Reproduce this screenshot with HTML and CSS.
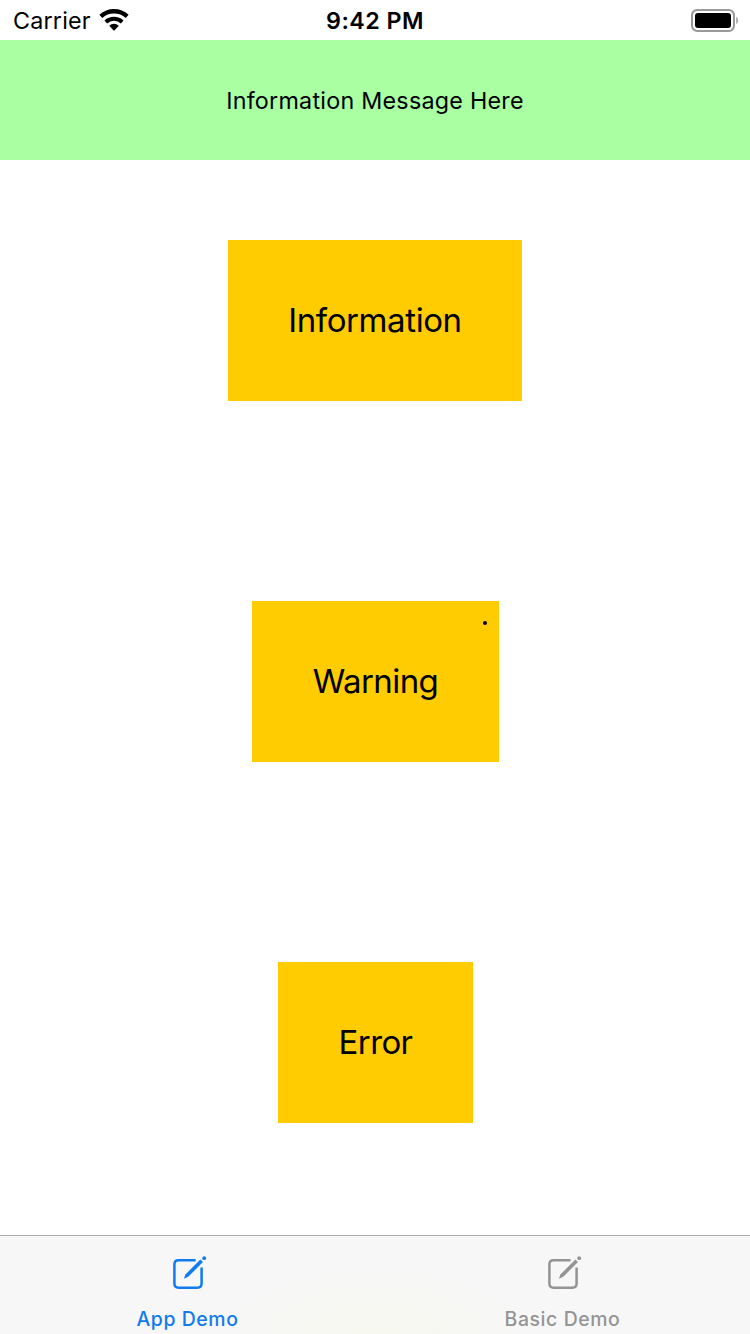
FILE: index.html
```html
<!DOCTYPE html>
<html lang="en">
<head>
<meta charset="utf-8">
<title>App Demo</title>
<link rel="stylesheet" href="styles.css">
</head>
<body>
<div class="screen">
  <header class="status">
    <div class="carrier">
      <span class="carrier-name">Carrier</span>
      <svg class="wifi" width="32" height="24" viewBox="0 0 32 24" fill="none" stroke="#000">
        <path stroke-width="4.3" d="M2.8 8.3A19.8 19.8 0 0 1 29.2 8.3"/>
        <path stroke-width="4" d="M7.8 13.9A12.3 12.3 0 0 1 24.2 13.9"/>
        <path fill="#000" stroke="none" d="M11.2 17.7A7 7 0 0 1 20.8 17.7L16.6 22.3Q16 22.9 15.4 22.3Z"/>
      </svg>
    </div>
    <span class="time">9:42 PM</span>
    <svg class="battery" width="50" height="24" viewBox="0 0 50 24">
      <rect x="2" y="2" width="42" height="21" rx="5.2" fill="none" stroke="#999" stroke-width="2"/>
      <rect x="5" y="5" width="36" height="15" rx="3" fill="#000"/>
      <path d="M46.3 8.8C48.5 10 48.5 15 46.3 16.2Z" fill="#999"/>
    </svg>
  </header>
  <div class="banner"><span class="banner-text">Information Message Here</span></div>
  <main class="content">
    <button class="box box-info"><span class="label label-info">Information</span></button>
    <button class="box box-warning"><span class="label">Warning</span><i class="dot"></i></button>
    <button class="box box-error"><span class="label">Error</span></button>
  </main>
  <nav class="tabs">
    <a class="tab active">
      <svg class="compose" width="40" height="36" viewBox="0 0 40 36" fill="none" stroke="currentColor">
        <path stroke-width="2.5" d="M25.6 5.3H8.6Q4.4 5.3 4.4 9.5V28.6Q4.4 32.8 8.6 32.8H27.4Q31.6 32.8 31.6 28.6V12.4"/>
        <path fill="currentColor" stroke="none" d="M14.1 22.9L15.6 19.3L30.4 4.5L33 7.1L18.2 21.8L14.6 23.5Q13.8 23.7 14.1 22.9Z"/>
        <circle cx="34.2" cy="3.2" r="1.9" fill="currentColor" stroke="none"/>
      </svg>
      <span class="tab-name">App Demo</span>
    </a>
    <a class="tab">
      <svg class="compose" width="40" height="36" viewBox="0 0 40 36" fill="none" stroke="currentColor">
        <path stroke-width="2.5" d="M25.6 5.3H8.6Q4.4 5.3 4.4 9.5V28.6Q4.4 32.8 8.6 32.8H27.4Q31.6 32.8 31.6 28.6V12.4"/>
        <path fill="currentColor" stroke="none" d="M14.1 22.9L15.6 19.3L30.4 4.5L33 7.1L18.2 21.8L14.6 23.5Q13.8 23.7 14.1 22.9Z"/>
        <circle cx="34.2" cy="3.2" r="1.9" fill="currentColor" stroke="none"/>
      </svg>
      <span class="tab-name">Basic Demo</span>
    </a>
  </nav>
</div>
</body>
</html>
```
FILE: styles.css
```css
* { box-sizing: border-box; }
body { margin: 0; background: #fff; color: #000; font-family: Inter, "Liberation Sans", sans-serif; }
svg { display: block; }
.screen { width: 750px; height: 1334px; display: flex; flex-direction: column; overflow: hidden; white-space: nowrap; }
.status { height: 40px; display: grid; grid-template-columns: 1fr auto 1fr; align-items: center; padding: 0 10px 0 13px; }
.carrier { display: flex; align-items: center; gap: 7px; }
.carrier-name { font-size: 23.3px; line-height: 38px; padding-top: 2px; letter-spacing: 0.2px; }
.time { font-size: 23.3px; line-height: 38px; padding-top: 2px; font-weight: 600; letter-spacing: 0.45px; margin-left: -3px; }
.battery { justify-self: end; }
.banner { height: 120px; background: #abffa3; display: flex; align-items: center; justify-content: center; }
.banner-text { font-size: 23.3px; line-height: 38px; padding-top: 2px; letter-spacing: 0.25px; }
.content { flex: 1; display: flex; flex-direction: column; align-items: center; gap: 200px; padding-top: 80px; }
.box { height: 161px; flex: none; border: 0; padding: 0; background: #ffcc02; color: #000; font: 400 33px/40px Inter, "Liberation Sans", sans-serif; display: flex; align-items: center; justify-content: center; position: relative; }
.box-info { width: 294px; }
.box-warning { width: 247px; margin-left: 1px; }
.box-error { width: 195px; margin-left: 1px; }
.label { letter-spacing: -0.6px; padding-bottom: 2px; }
.label-info { letter-spacing: -0.4px; }
.dot { position: absolute; right: 12px; top: 20px; width: 4px; height: 4px; border-radius: 50%; background: #000; }
.tabs { height: 99px; display: grid; grid-template-columns: 1fr 1fr; border-top: 1px solid #adadad; background: radial-gradient(ellipse 150px 65px at 50% 100%, #f7f8ef, #f7f7f7); }
.tab { display: flex; flex-direction: column; align-items: center; padding-top: 19px; color: #949494; }
.active { color: #107bed; }
.compose { margin-left: 4px; }
.tab-name { font-size: 19.4px; line-height: 24px; margin-top: 16px; font-weight: 500; letter-spacing: 0.6px; }
```
